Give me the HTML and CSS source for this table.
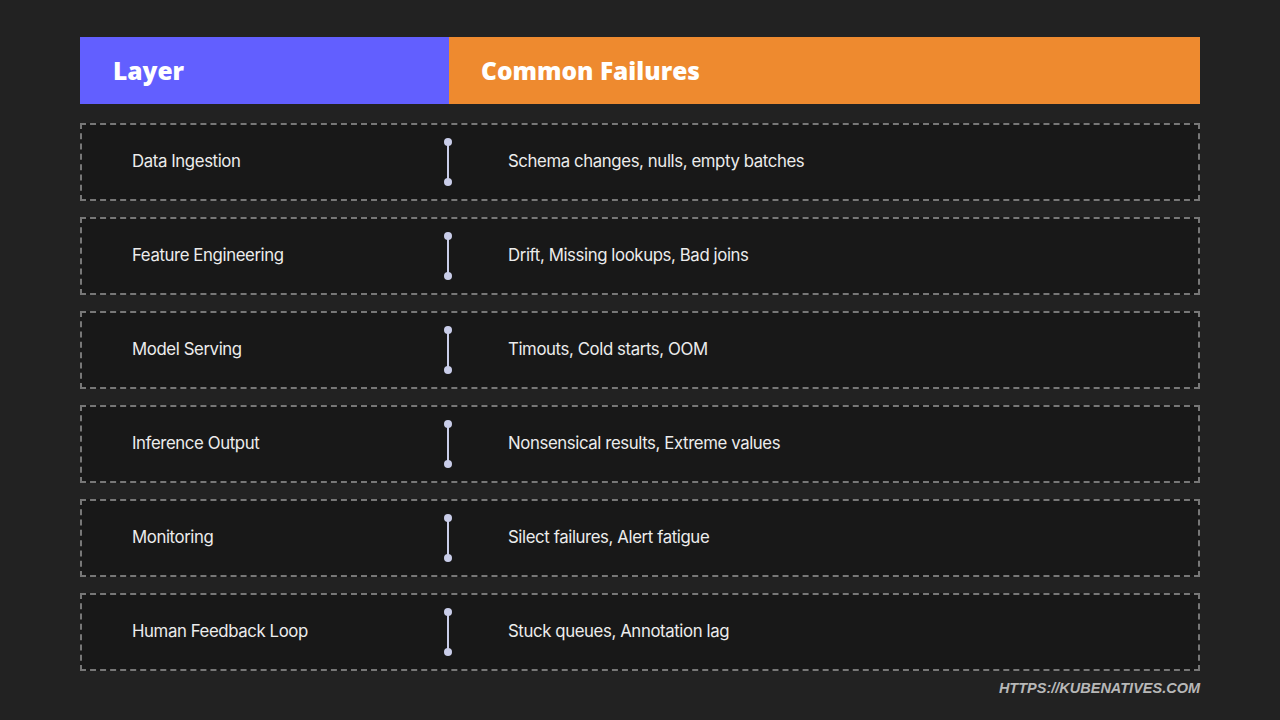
FILE: index.html
```html
<!DOCTYPE html>
<html>
<head>
<meta charset="utf-8">
<link rel="stylesheet" href="styles.css">
</head>
<body>
<main class="page">
  <div class="head">
    <div class="head-cell head-layer">Layer</div>
    <div class="head-cell head-fail">Common Failures</div>
  </div>
  <div class="rows">
    <div class="row"><span class="label">Data Ingestion</span><span class="conn"></span><span class="value">Schema changes, nulls, empty batches</span></div>
    <div class="row"><span class="label">Feature Engineering</span><span class="conn"></span><span class="value">Drift, Missing lookups, Bad joins</span></div>
    <div class="row"><span class="label">Model Serving</span><span class="conn"></span><span class="value">Timouts, Cold starts, OOM</span></div>
    <div class="row"><span class="label">Inference Output</span><span class="conn"></span><span class="value">Nonsensical results, Extreme values</span></div>
    <div class="row"><span class="label">Monitoring</span><span class="conn"></span><span class="value">Silect failures, Alert fatigue</span></div>
    <div class="row"><span class="label">Human Feedback Loop</span><span class="conn"></span><span class="value">Stuck queues, Annotation lag</span></div>
  </div>
  <div class="footer">HTTPS://KUBENATIVES.COM</div>
</main>
</body>
</html>
```
FILE: styles.css
```css
html, body {
  margin: 0;
  padding: 0;
  background: #222222;
}
.page {
  width: 1120px;
  margin: 0 auto;
  padding-top: 37px;
  font-family: Inter, "Noto Sans", sans-serif;
}
.head {
  display: grid;
  grid-template-columns: 369px 1fr;
  height: 67px;
}
.head-cell {
  display: flex;
  align-items: center;
  color: #ffffff;
  font-family: "Open Sans", sans-serif;
  font-weight: 800;
  font-size: 24.5px;
  letter-spacing: 0;
}
.head-layer {
  background: #625fff;
  padding-left: 33px;
}
.head-fail {
  background: #ee8a2f;
  padding-left: 32px;
}
.rows {
  display: flex;
  flex-direction: column;
  gap: 16px;
  margin-top: 19px;
}
.row {
  box-sizing: border-box;
  height: 78px;
  border: 2px dashed #777777;
  background: #181818;
  display: grid;
  grid-template-columns: 311px 10px 1fr;
  align-items: center;
  padding-left: 50px;
}
.label, .value {
  color: #ececec;
  font-size: 16.8px;
  letter-spacing: -0.4px;
  padding-bottom: 2px;
}
.value {
  padding-left: 55px;
}
.conn {
  position: relative;
  height: 48px;
  width: 10px;
}
.conn::before {
  content: "";
  position: absolute;
  left: 4px;
  top: 4px;
  width: 2px;
  height: 40px;
  background: #c9cde9;
}
.conn::after {
  content: "";
  position: absolute;
  left: 1px;
  top: 0;
  width: 8px;
  height: 8px;
  border-radius: 50%;
  background: #c9cde9;
  box-shadow: 0 40px 0 #c9cde9;
}
.footer {
  text-align: right;
  margin-top: 9px;
  color: #b8b8b8;
  font-family: "Liberation Sans", Arial, sans-serif;
  font-weight: 700;
  font-style: italic;
  font-size: 14.5px;
}
```
